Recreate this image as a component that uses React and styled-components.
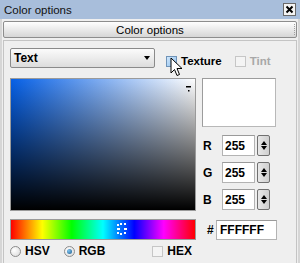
import React from "react";
import styled, { createGlobalStyle } from "styled-components";

const Global = createGlobalStyle`
  html, body { margin: 0; padding: 0; background: #efefef; }
  body { font-family: Tahoma, "DejaVu Sans", "Liberation Sans", sans-serif; }
  #root { width: 300px; height: 263px; overflow: hidden; }
`;

const Window = styled.div`
  position: relative;
  width: 300px;
  height: 263px;
  background: #efefef;
  overflow: hidden;
  font-family: "Liberation Sans", Arial, sans-serif;
  color: #000;
`;

const TitleBar = styled.div`
  height: 19px;
  background: #a8bedb;
  display: flex;
  align-items: center;
  justify-content: space-between;
  padding: 0 4px 0 4px;
  font-size: 11.5px;
  color: #111;
  box-sizing: border-box;
`;

const CloseBtn = styled.div`
  width: 11px;
  height: 11px;
  border: 1px solid #6a6a6a;
  background: #f4f4f4;
  display: flex;
  align-items: center;
  justify-content: center;
`;

const Body = styled.div`
  border-left: 2px solid #d6d6d6;
  border-right: 2px solid #d6d6d6;
  height: 244px;
  box-sizing: border-box;
  padding-top: 2px;
`;

const HeaderBar = styled.div`
  margin: 0 1px;
  height: 17px;
  border: 1px solid #8d8d8d;
  border-radius: 2px;
  background: linear-gradient(#fefefe, #e6e6e6 60%, #d6d6d6);
  display: flex;
  align-items: center;
  justify-content: center;
  font-size: 11.5px;
  box-sizing: border-box;
  position: relative;
`;

const Grip = styled.div`
  position: absolute;
  right: 1px;
  top: 2px;
  bottom: 2px;
  width: 1px;
  border-right: 1px dotted #a0a0a0;
`;

const Panel = styled.div`
  margin: 2px 1px 0 1px;
  border-left: 1px solid #c4c4c4;
  border-right: 1px solid #c4c4c4;
  border-top: 1px solid #c4c4c4;
  height: 230px;
  box-sizing: border-box;
  padding: 7px 0 0 6px;
  position: relative;
`;

const TopRow = styled.div`
  display: flex;
  align-items: flex-start;
  height: 20px;
`;

const Select = styled.div`
  width: 145px;
  height: 20px;
  box-sizing: border-box;
  border: 1px solid #8a8a8a;
  border-radius: 2px;
  background: linear-gradient(#fbfbfb, #ececec 50%, #dcdcdc);
  display: flex;
  align-items: center;
  justify-content: space-between;
  padding: 0 3px 0 3px;
  font-size: 12px;
  font-weight: bold;
`;

const Arrow = styled.span`
  width: 0;
  height: 0;
  border-left: 3.5px solid transparent;
  border-right: 3.5px solid transparent;
  border-top: 4px solid #000;
  margin-right: 1px;
`;

const Check = styled.label`
  display: flex;
  align-items: center;
  margin-top: 7px;
  margin-left: ${(p) => p.$ml}px;
  font-size: 11.5px;
  font-weight: bold;
  color: ${(p) => (p.$disabled ? "#a8a8a8" : "#000")};
  gap: 4px;
`;

const Box = styled.span`
  display: inline-block;
  width: 11px;
  height: 11px;
  box-sizing: border-box;
  border: 1px solid ${(p) => (p.$disabled ? "#c6c6c6" : "#6f93b8")};
  background: ${(p) =>
    p.$hot
      ? "linear-gradient(135deg, #cfe6fb, #8fc0ee)"
      : p.$disabled
      ? "#f4f4f4"
      : "linear-gradient(135deg, #e2e2e2, #ffffff)"};
`;

const Main = styled.div`
  display: grid;
  grid-template-columns: 186px 81px;
  grid-template-rows: 133px auto;
  column-gap: 6px;
  margin-top: 10px;
`;

const Square = styled.div`
  width: 186px;
  height: 133px;
  box-sizing: border-box;
  border: 1px solid #9a9a9a;
  position: relative;
  background:
    linear-gradient(to bottom, rgba(0,0,0,0), #000),
    linear-gradient(to right, #0660e6, #ffffff);
`;

const SqMarker = styled.div`
  position: absolute;
  right: 3px;
  top: -1px;
`;

const RightCol = styled.div`
  display: flex;
  flex-direction: column;
  gap: 6px;
`;

const Preview = styled.div`
  width: 74px;
  height: 49px;
  box-sizing: border-box;
  border: 1px solid #b8b8b8;
  border-top-color: #9c9c9c;
  border-left-color: #9c9c9c;
  background: #fff;
  margin-bottom: 2px;
`;

const ChanRow = styled.div`
  display: flex;
  align-items: center;
  height: 21px;
`;

const ChanLabel = styled.span`
  width: 20px;
  padding-left: 1px;
  font-size: 12px;
  font-weight: bold;
  box-sizing: border-box;
`;

const NumInput = styled.div`
  width: 33px;
  height: 21px;
  box-sizing: border-box;
  border: 1px solid #b3b3b3;
  border-top-color: #9a9a9a;
  background: #fff;
  font-size: 12px;
  font-weight: bold;
  display: flex;
  align-items: center;
  padding-left: 2px;
`;

const Spin = styled.div`
  width: 13px;
  height: 21px;
  margin-left: 2px;
  box-sizing: border-box;
  border: 1px solid #707070;
  border-radius: 2px;
  background: linear-gradient(to right, #e8e8e8, #cfcfcf);
  display: flex;
  flex-direction: column;
  align-items: center;
  justify-content: center;
  gap: 1px;
`;

const Tri = styled.span`
  width: 0;
  height: 0;
  border-left: 3.5px solid transparent;
  border-right: 3.5px solid transparent;
  ${(p) => (p.$up ? "border-bottom: 4px solid #000;" : "border-top: 4px solid #000;")}
`;

const HueBar = styled.div`
  width: 186px;
  height: 21px;
  box-sizing: border-box;
  border: 1px solid #9a9a9a;
  margin-top: 8px;
  position: relative;
  background: linear-gradient(to right, #ff0000 0%, #ffff00 17%, #00ff00 33%, #00ffff 50%, #0000ff 67%, #ff00ff 83%, #ff0000 100%);
`;

const HueMarker = styled.div`
  position: absolute;
  left: 104px;
  top: 2px;
`;

const HexRow = styled.div`
  display: flex;
  align-items: center;
  margin-top: 9px;
  height: 20px;
`;

const Hash = styled.span`
  width: 14px;
  padding-left: 5px;
  box-sizing: border-box;
  font-size: 12px;
  font-weight: bold;
`;

const HexInput = styled.div`
  width: 61px;
  height: 20px;
  box-sizing: border-box;
  border: 1px solid #b3b3b3;
  border-top-color: #9a9a9a;
  background: #fff;
  font-size: 12px;
  font-weight: bold;
  display: flex;
  align-items: center;
  padding-left: 3px;
`;

const RadioRow = styled.div`
  display: flex;
  align-items: center;
  margin-top: 4px;
  height: 14px;
`;

const Opt = styled.label`
  display: flex;
  align-items: center;
  gap: 4px;
  font-size: 12px;
  font-weight: bold;
  margin-left: ${(p) => p.$ml || 0}px;
`;

const Radio = styled.span`
  width: 11px;
  height: 11px;
  border-radius: 50%;
  box-sizing: border-box;
  border: 1px solid #8c8c8c;
  background: radial-gradient(circle at 35% 35%, #ffffff, #d8d8d8);
  display: flex;
  align-items: center;
  justify-content: center;
  &::after {
    content: "";
    display: ${(p) => (p.$on ? "block" : "none")};
    width: 5px;
    height: 5px;
    border-radius: 50%;
    background: radial-gradient(circle at 35% 35%, #7fc4f0, #1a5a8c);
  }
`;

const Cursor = styled.svg`
  position: absolute;
  left: 166px;
  top: 16px;
`;

export default function App() {
  return (
    <Window>
      <Global />
      <TitleBar>
        <span>Color options</span>
        <CloseBtn>
          <svg width="9" height="9" viewBox="0 0 9 9">
            <path d="M1.5 1.5 L7.5 7.5 M7.5 1.5 L1.5 7.5" stroke="#000" strokeWidth="2" />
          </svg>
        </CloseBtn>
      </TitleBar>
      <Body>
        <HeaderBar>
          Color options
          <Grip />
        </HeaderBar>
        <Panel>
          <TopRow>
            <Select>
              <span>Text</span>
              <Arrow />
            </Select>
            <Check $ml={11}>
              <Box $hot />
              Texture
            </Check>
            <Check $ml={13} $disabled>
              <Box $disabled />
              Tint
            </Check>
          </TopRow>
          <Main>
            <Square>
              <SqMarker>
                <svg width="6" height="6" viewBox="0 0 6 6">
                  <rect x="0" y="0" width="5" height="1.5" fill="#000" />
                  <rect x="2" y="4" width="1.5" height="1.5" fill="#000" />
                </svg>
              </SqMarker>
            </Square>
            <RightCol>
              <Preview />
              <ChanRow>
                <ChanLabel>R</ChanLabel>
                <NumInput>255</NumInput>
                <Spin><Tri $up /><Tri /></Spin>
              </ChanRow>
              <ChanRow>
                <ChanLabel>G</ChanLabel>
                <NumInput>255</NumInput>
                <Spin><Tri $up /><Tri /></Spin>
              </ChanRow>
              <ChanRow>
                <ChanLabel>B</ChanLabel>
                <NumInput>255</NumInput>
                <Spin><Tri $up /><Tri /></Spin>
              </ChanRow>
            </RightCol>
            <HueBar>
              <HueMarker>
                <svg width="14" height="14" viewBox="0 0 14 14">
                  <g fill="#fff">
                    <rect x="2" y="2" width="2" height="2" />
                    <rect x="5" y="1" width="2" height="2" />
                    <rect x="9" y="1" width="2" height="2" />
                    <rect x="2" y="6" width="3" height="2" />
                    <rect x="9" y="6" width="3" height="2" />
                    <rect x="2" y="10" width="2" height="2" />
                    <rect x="5" y="11" width="2" height="2" />
                    <rect x="9" y="10" width="2" height="2" />
                  </g>
                </svg>
              </HueMarker>
            </HueBar>
            <HexRow>
              <Hash>#</Hash>
              <HexInput>FFFFFF</HexInput>
            </HexRow>
          </Main>
          <RadioRow>
            <Opt>
              <Radio />
              HSV
            </Opt>
            <Opt $ml={14}>
              <Radio $on />
              RGB
            </Opt>
            <Opt $ml={47}>
              <Box $disabled />
              HEX
            </Opt>
          </RadioRow>
          <Cursor width="14" height="21" viewBox="0 0 14 21">
            <path d="M1 1 L1 16 L4.5 12.5 L7 18.5 L9.5 17.5 L7 11.5 L12 11.5 Z" fill="#fff" stroke="#000" strokeWidth="1" strokeLinejoin="round" />
          </Cursor>
        </Panel>
      </Body>
    </Window>
  );
}
